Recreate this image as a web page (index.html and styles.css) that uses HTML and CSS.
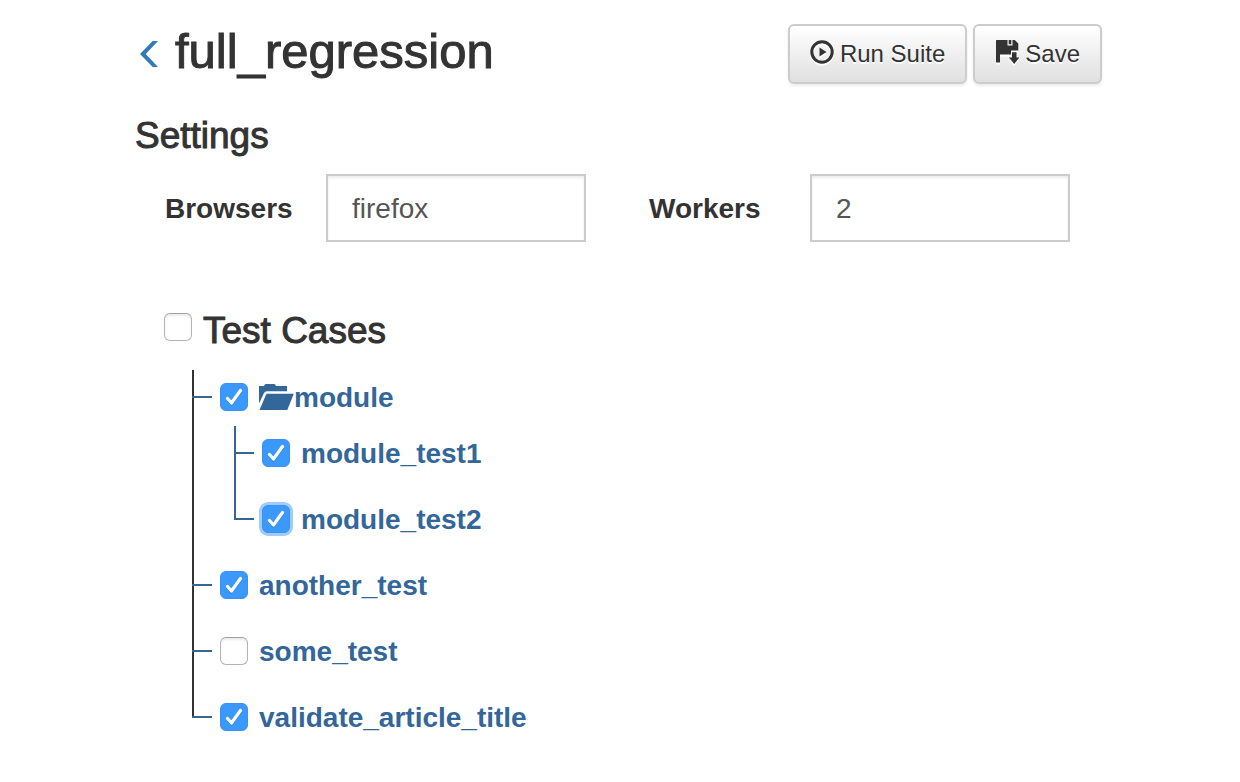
FILE: index.html
```html
<!DOCTYPE html>
<html lang="en">
<head>
<meta charset="utf-8">
<title>full_regression</title>
<link rel="stylesheet" href="styles.css">
</head>
<body>
<svg class="symbols" aria-hidden="true">
  <symbol id="tick" viewBox="0 0 28 28"><path d="M7.500 15.500L11.500 20L20.500 7.500" fill="none" stroke="#fff" stroke-width="3.200" stroke-linecap="round" stroke-linejoin="round"/></symbol>
</svg>
<main class="page">
  <header class="header">
    <div class="heading">
      <a class="back" href="#" aria-label="Back">
        <svg width="18" height="26" viewBox="0 0 18 26"><path d="M0 13L12.700 0H18L5.800 13L18 26H12.700Z" fill="currentColor"/></svg>
      </a>
      <h1 class="title">full_regression</h1>
    </div>
    <div class="actions">
      <button class="button" type="button">
        <svg class="button-icon" width="24" height="24" viewBox="0 0 24 24"><circle cx="12" cy="12" r="10.200" fill="none" stroke="currentColor" stroke-width="3"/><path d="M9.500 7.500L16.500 12L9.500 16.500Z" fill="currentColor"/></svg>
        Run Suite
      </button>
      <button class="button" type="button">
        <svg class="button-icon" width="24" height="24" viewBox="0 0 24 24"><path d="M1.700 0H12.500V5.500H17.500V0H19.700L23.300 3.600V10.500H16V14.500H5V22.500H1.700Q1 22.500 1 21.800V.7Q1 0 1.700 0ZM13.700 0H16.300V4.300H13.700ZM17 12.300H21.500V17.500H24.300L19.200 24L14 17.500H17Z" fill="currentColor"/></svg>
        Save
      </button>
    </div>
  </header>

  <h2 class="section-title">Settings</h2>
  <form class="settings">
    <div class="field">
      <label class="field-label" for="browsers">Browsers</label>
      <input class="field-input" id="browsers" type="text" value="firefox">
    </div>
    <div class="field">
      <label class="field-label" for="workers">Workers</label>
      <input class="field-input" id="workers" type="text" value="2">
    </div>
  </form>

  <section class="cases">
    <div class="cases-head">
      <span class="check"><input class="box" id="all" type="checkbox"></span>
      <h2 class="section-title cases-title"><label for="all">Test Cases</label></h2>
    </div>
    <ul class="tree">
      <li class="node">
        <div class="row">
          <span class="check"><input class="box" id="module" type="checkbox" checked><svg class="tick"><use href="#tick"/></svg></span>
          <label class="name" for="module"><svg class="folder" width="35" height="26" viewBox="0 0 35 26"><path d="M0 2H5Q5.500 0 7 0H15Q16.500 0 17 2H28V7.300H8Q5.700 7.300 5 9L0 19.500ZM8.500 9.700H34.800L28.300 26H.500L7 10.700Q7.500 9.700 8.500 9.700Z" fill="currentColor"/></svg>module</label>
        </div>
        <ul class="tree subtree">
          <li class="node"><div class="row">
            <span class="check"><input class="box" id="test1" type="checkbox" checked><svg class="tick"><use href="#tick"/></svg></span>
            <label class="name" for="test1">module_test1</label>
          </div></li>
          <li class="node"><div class="row">
            <span class="check"><input class="box box-active" id="test2" type="checkbox" checked><svg class="tick"><use href="#tick"/></svg></span>
            <label class="name" for="test2">module_test2</label>
          </div></li>
        </ul>
      </li>
      <li class="node"><div class="row">
        <span class="check"><input class="box" id="another" type="checkbox" checked><svg class="tick"><use href="#tick"/></svg></span>
        <label class="name" for="another">another_test</label>
      </div></li>
      <li class="node"><div class="row">
        <span class="check"><input class="box" id="some" type="checkbox"></span>
        <label class="name" for="some">some_test</label>
      </div></li>
      <li class="node"><div class="row">
        <span class="check"><input class="box" id="validate" type="checkbox" checked><svg class="tick"><use href="#tick"/></svg></span>
        <label class="name" for="validate">validate_article_title</label>
      </div></li>
    </ul>
  </section>
</main>
</body>
</html>
```
FILE: styles.css
```css
* { box-sizing: border-box; }

body {
  margin: 0;
  background: #fff;
  color: #333;
  font-family: "Liberation Sans", Arial, sans-serif;
  font-size: 28px;
}

.symbols { display: none; }

.page { padding: 24px 138px 24px 135px; }

.header {
  display: flex;
  justify-content: space-between;
  align-items: flex-start;
}

.heading { display: flex; padding-left: 5px; gap: 17px; }

.back { display: flex; align-items: center; color: #337ab7; height: 60px; }

.title {
  margin: 0;
  font-size: 49px;
  font-weight: 500;
  line-height: 54px;
  -webkit-text-stroke: 1px currentColor;
}

.actions { display: flex; gap: 6px; }

.button {
  display: flex;
  align-items: center;
  gap: 6px;
  height: 60px;
  padding: 0 20px;
  border: 2px solid #ccc;
  border-radius: 6px;
  background: linear-gradient(#fff, #e0e0e0);
  box-shadow: 0 2px 3px rgba(0, 0, 0, .08);
  color: #333;
  font-family: inherit;
  font-size: 24px;
  line-height: 32px;
  white-space: nowrap;
  text-shadow: 0 2px 0 #fff;
}

.button-icon { margin-bottom: 4px; filter: drop-shadow(0 2px 0 #fff); }

.section-title {
  margin: 32px 0 18px;
  font-size: 37px;
  font-weight: 500;
  line-height: 40px;
  -webkit-text-stroke: 1px currentColor;
}

.settings { display: flex; gap: 63px; padding: 0 32px 0 30px; }

.field { display: flex; flex: 1; align-items: center; min-width: 0; }

.field-label { flex: 0 0 161px; padding-top: 2px; font-weight: 700; }

.field-input {
  flex: 1;
  min-width: 0;
  height: 68px;
  padding: 2px 24px 0;
  border: 2px solid #ccc;
  border-radius: 0;
  background: #fff;
  box-shadow: inset 0 2px 3px rgba(0, 0, 0, .08);
  color: #555;
  font: inherit;
}

.cases { padding-left: 29px; margin-top: 69px; }

.cases-head { display: flex; align-items: flex-start; gap: 11px; padding-bottom: 19px; }

.cases-head .check { margin-top: 2px; }

.cases-title { margin: 0; }

.check { display: grid; flex: none; width: 28px; height: 28px; }

.box, .tick { grid-area: 1 / 1; width: 28px; height: 28px; margin: 0; }

.box {
  appearance: none;
  border: 1px solid #b4b4b4;
  border-top-color: #a0a0a0;
  border-radius: 6px;
  background: #fff;
  box-shadow: inset 0 2px 2px rgba(0, 0, 0, .08);
}

.box:checked {
  border-color: #3a90f4;
  background: #3b99fc;
  box-shadow: none;
}

.box-active:checked { box-shadow: 0 0 0 3px #9dccfd; }

.tick { pointer-events: none; filter: drop-shadow(0 1px 0 rgba(0, 60, 140, .25)); z-index: 1; }

.tree {
  position: relative;
  display: flex;
  flex-direction: column;
  gap: 12px;
  margin: 0 0 0 28px;
  padding: 0;
  list-style: none;
  color: #333;
}

.tree::before {
  content: "";
  position: absolute;
  top: 0;
  bottom: 26px;
  left: 0;
  border-left: 2px solid currentColor;
}

.subtree { margin: 2px 0 0 42px; color: #369; }

.row {
  display: flex;
  align-items: center;
  height: 54px;
  color: #369;
}

.row::before {
  content: "";
  width: 20px;
  height: 2px;
  margin-right: 8px;
  background: currentColor;
  z-index: 1;
}

.name {
  display: flex;
  align-items: center;
  margin-left: 11px;
  padding-top: 2px;
  font-weight: 700;
}

.folder { margin-bottom: 2px; }
```
